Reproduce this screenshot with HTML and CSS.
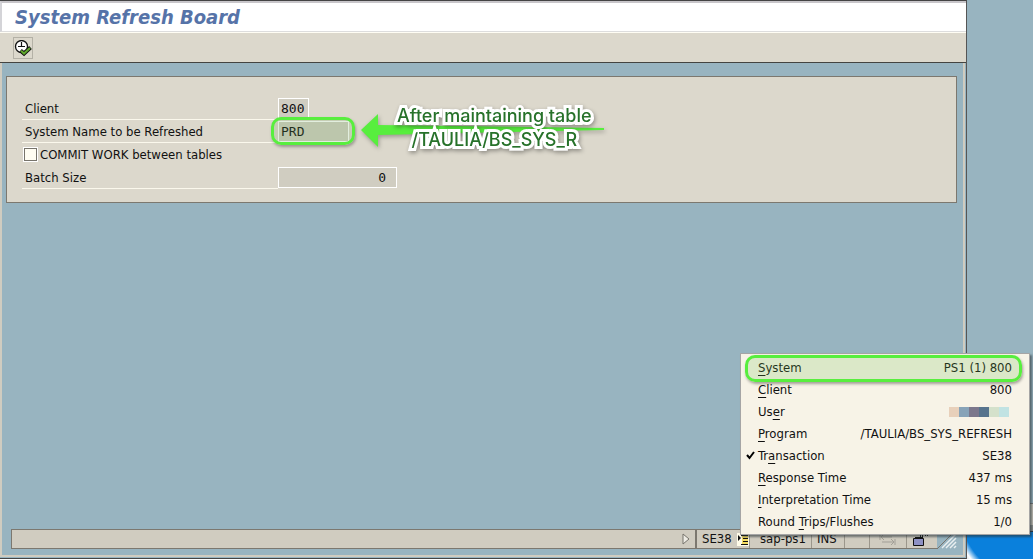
FILE: index.html
```html
<!DOCTYPE html>
<html lang="en">
<head>
    <meta charset="UTF-8">
    <meta name="viewport" content="width=device-width, initial-scale=1.0">
    <title>System Refresh Board</title>
    <link rel="stylesheet" href="styles.css">
</head>
<body>
    <div class="window">
        <header class="title-bar">
            <h1>System Refresh Board</h1>
        </header>

        <div class="toolbar">
            <button class="execute" type="button" aria-label="Execute">
                <svg width="18" height="17" viewBox="0 0 18 17">
                    <circle cx="7.5" cy="6.5" r="6" fill="#fff" stroke="#111" stroke-width="1.3"/>
                    <path d="M7.5 2v5M4 6.500h7" fill="none" stroke="#111" stroke-width="1.2"/>
                    <path d="M6.500 10.500l3.500 3 6.500-6" fill="none" stroke="#111" stroke-width="4"/>
                    <path d="M7 10.800l3 2.700 6-5.500" fill="none" stroke="#5fa72c" stroke-width="2.2"/>
                </svg>
            </button>
        </div>

        <main class="content">
            <form class="group">
                <div class="row">
                    <label for="client">Client</label>
                    <input id="client" class="field short" type="text" value="800" readonly>
                </div>
                <div class="row">
                    <label for="sysname">System Name to be Refreshed</label>
                    <div class="marked">
                        <input id="sysname" class="field medium" type="text" value="PRD" readonly>
                        <span class="ring"></span>
                        <!-- Callout pointing at the system name -->
                        <div class="callout">
                            <svg class="arrow" width="245" height="36" viewBox="0 0 245 36">
                                <path d="M0 17L17 1V12L243 15V17L17 22V34Z" fill="#58ee3e"/>
                            </svg>
                            <p>After maintaining table<br>/TAULIA/BS_SYS_R</p>
                        </div>
                    </div>
                </div>
                <div class="row plain">
                    <input id="commit" class="check" type="checkbox">
                    <label for="commit">COMMIT WORK between tables</label>
                </div>
                <div class="row">
                    <label for="batch">Batch Size</label>
                    <input id="batch" class="field long" type="text" value="0" readonly>
                </div>
            </form>
        </main>

        <footer class="footer">
            <div class="message">
                <svg width="9" height="12" viewBox="0 0 9 12"><path d="M1 1v10l6-5z" fill="#eeece4" stroke="#77746c"/></svg>
            </div>
            <div class="status">
                <span class="cell tcode">SE38
                    <svg width="12" height="13" viewBox="0 0 12 13">
                        <path d="M0 0h12v13H0z" fill="#fffbe8"/>
                        <path d="M5 2h6v9H5z" fill="#f5dc61"/>
                        <path d="M1 2v6l3-3z" fill="#111"/>
                        <path d="M4 2.500h7M6 5.500h5M6 8.500h5M4 11.500h7" fill="none" stroke="#111"/>
                    </svg>
                </span>
                <span class="cell server">sap-ps1</span>
                <span class="cell mode">INS</span>
                <span class="cell blank"></span>
                <span class="cell transfer">
                    <svg width="17" height="13" viewBox="0 0 17 13">
                        <path d="M1 1v6M2 4h11M5 1L2 4l3 3M3 9h12M12 6l3 3-3 3M16 6v6" fill="none" stroke="#a29f97"/>
                    </svg>
                </span>
                <span class="cell lock">
                    <svg width="17" height="15" viewBox="0 0 17 15">
                        <path d="M1.500 6.500h10v7h-10z" fill="#8e91c4" stroke="#111"/>
                        <path d="M3 5.500h8M8.500 1v4M10.500 1v4M13.500 1v3M15.500 1v3" fill="none" stroke="#111"/>
                    </svg>
                </span>
            </div>
            <svg class="grip" width="20" height="20" viewBox="0 0 20 20">
                <path d="M0 20L20 0" stroke="#77746c"/>
                <path d="M5 19L19 5M9 19L19 9M13 19L19 13M17 19l2-2" stroke="#e9eff0" stroke-width="1.500"/>
            </svg>
        </footer>
    </div>

    <aside class="desktop">
        <div class="panel"></div>
        <div class="wallpaper"></div>
    </aside>

    <ul class="menu">
        <li class="current"><span><u>S</u>ystem</span><span>PS1 (1) 800</span></li>
        <li><span><u>C</u>lient</span><span>800</span></li>
        <li>
            <span>Us<u>e</u>r</span>
            <span class="hidden-name"><i class="c1"></i><i class="c2"></i><i class="c3"></i><i class="c4"></i><i class="c5"></i><i class="c6"></i></span>
        </li>
        <li><span><u>P</u>rogram</span><span>/TAULIA/BS_SYS_REFRESH</span></li>
        <li class="checked">
            <svg width="9" height="9" viewBox="0 0 9 9"><path d="M1 4l2.500 3L8 1" fill="none" stroke="#000" stroke-width="2"/></svg>
            <span>Tr<u>a</u>nsaction</span><span>SE38</span>
        </li>
        <li><span><u>R</u>esponse Time</span><span>437 ms</span></li>
        <li><span><u>I</u>nterpretation Time</span><span>15 ms</span></li>
        <li><span>Round <u>T</u>rips/Flushes</span><span>1/0</span></li>
    </ul>
</body>
</html>
```

FILE: styles.css
```css
*,
*::before {
    box-sizing: border-box;
}

body {
    margin: 0;
    position: relative;
    display: flex;
    min-height: 100vh;
    background: #98b4c0;
    color: #111;
    font-family: "DejaVu Sans Condensed", "DejaVu Sans", sans-serif;
    font-size: 13px;
    line-height: 16px;
}

.window {
    flex: 1;
    display: flex;
    flex-direction: column;
    border-top: 1px solid #444;
    border-right: 1px solid #555;
    border-bottom: 1px solid #444;
}

.title-bar {
    height: 31px;
    padding: 0 13px;
    border-top: 2px solid #c8c6ca;
    border-left: 2px solid #d4d4d8;
    border-bottom: 1px solid #ddd;
    background: #fff;
}

h1 {
    margin: 0;
    color: #5673a8;
    font-size: 20px;
    font-style: italic;
    font-weight: bold;
    line-height: 28px;
}

.toolbar {
    display: flex;
    height: 31px;
    padding: 4px 13px;
    border-top: 1px solid #fffdf4;
    border-bottom: 1px solid #444440;
    background: #dcd8cc;
}

.execute {
    display: flex;
    width: 20px;
    height: 22px;
    padding: 2px 0 0;
    border: 1px solid #b4b1a6;
    background: #dcd8cc;
}

.content {
    flex: 1;
    padding: 13px 4px;
    border-left: 2px solid #d0ccc0;
    border-right: 2px solid #d0ccc0;
}

.content,
.footer {
    margin-right: 1px;
}

.group {
    margin-right: 2px;
    padding: 20px 15px 13px;
    border: 1px solid #7c786f;
    background: #dcd8cc;
}

.row {
    display: flex;
    align-items: center;
    width: 376px;
    height: 23px;
}

.row > label {
    width: 256px;
    height: 22px;
    padding: 3px;
    border-bottom: 1px solid #fbf8ec;
}

.row.plain > label {
    padding-left: 2px;
    border-bottom: 0;
}

.field {
    height: 21px;
    padding: 0 3px;
    border: 1px solid #fff;
    border-radius: 0;
    outline: 0;
    background: #d0cdc1;
    color: #111;
    font-family: "DejaVu Sans Mono", monospace;
    font-size: 13px;
}

.short {
    width: 31px;
    padding: 0 2px;
}

.medium {
    display: block;
    width: 71px;
    padding: 0 2px;
}

.long {
    width: 119px;
    padding-right: 10px;
    text-align: right;
}

.marked {
    position: relative;
}

.ring {
    position: absolute;
    top: -4px;
    left: -7px;
    width: 84px;
    height: 28px;
    border: 3px solid #58ee3e;
    border-radius: 10px;
    background: rgba(110, 170, 90, 0.2);
    box-shadow: 1px 2px 3px rgba(0, 0, 0, 0.3);
}

.callout {
    position: absolute;
    top: -8px;
    left: 83px;
    width: 245px;
}

.arrow {
    display: block;
    filter: drop-shadow(1px 2px 2px rgba(0, 0, 0, 0.3));
}

.callout p {
    position: absolute;
    top: -9px;
    left: 36px;
    margin: 0;
    color: #27722a;
    font-family: Inter, "Liberation Sans", sans-serif;
    font-size: 18px;
    font-weight: 500;
    line-height: 24px;
    text-align: center;
    white-space: nowrap;
    paint-order: stroke fill;
    -webkit-text-stroke: 6px #fff;
    filter: drop-shadow(1px 2px 2px rgba(0, 0, 0, 0.35));
}

.check {
    appearance: none;
    width: 15px;
    height: 15px;
    margin: 0 0 0 1px;
    border: 1px solid #fff;
    outline: 1px solid #77746c;
    outline-offset: -2px;
    background: #fffdf2;
}

.footer {
    display: flex;
    margin-bottom: 1px;
    padding: 0 6px 6px 9px;
    border: 2px solid #d0ccc0;
    border-top: 0;
}

.message,
.status {
    display: flex;
    align-items: center;
    height: 20px;
    border: 1px solid #7c786f;
    background: #d0ccc0;
}

.message {
    flex: 1;
    justify-content: flex-end;
    padding-right: 4px;
}

.status {
    border-right: 0;
}

.cell {
    display: flex;
    align-items: center;
    height: 18px;
    padding-left: 5px;
    border-right: 1px solid #9b978c;
}

.tcode {
    gap: 5px;
    width: 53px;
}

.server {
    width: 62px;
    padding-left: 10px;
}

.mode {
    width: 33px;
}

.blank {
    width: 25px;
}

.transfer {
    width: 37px;
    padding-left: 9px;
}

.lock {
    width: 30px;
    border-right: 0;
}

.desktop {
    display: flex;
    flex-direction: column;
    justify-content: flex-end;
    width: 66px;
}

.panel {
    height: 28px;
    border-top: 1px solid #777;
    border-bottom: 6px solid #8b8f8d;
    background: #c5c2b8;
}

.wallpaper {
    height: 28px;
    border-top: 1px solid #234;
    background: radial-gradient(circle at 75px -30px, #0a80dc 84px, #fff 91px, #98b4c0 100px);
}

/* System information popup */
.menu {
    position: absolute;
    right: 3px;
    bottom: 24px;
    width: 290px;
    margin: 0;
    padding: 3px 2px 1px;
    border: 1px solid #a5a5a5;
    background: #f7f3e7;
    box-shadow: 2px 2px 2px rgba(40, 50, 55, 0.6);
    list-style: none;
}

.menu li {
    position: relative;
    display: flex;
    justify-content: space-between;
    height: 22px;
    padding: 3px 15px;
}

.menu u {
    text-underline-offset: 3px;
}

.menu .current::before {
    content: "";
    position: absolute;
    top: -2px;
    left: 2px;
    right: 5px;
    height: 27px;
    border: 3px solid #58ee3e;
    border-radius: 10px;
    background: rgba(110, 190, 80, 0.2);
    box-shadow: 1px 2px 3px rgba(0, 0, 0, 0.35);
}

.checked svg {
    position: absolute;
    left: 3px;
    top: 6px;
}

.hidden-name {
    display: flex;
    padding: 3px;
}

.hidden-name i {
    width: 10px;
    height: 10px;
}

.c1 { background: #e8d0ba; }
.c2 { background: #87a3b8; }
.c3 { background: #7b778c; }
.c4 { background: #56738d; }
.c5 { background: #d4e1cb; }
.c6 { background: #c1e3e3; }
```
